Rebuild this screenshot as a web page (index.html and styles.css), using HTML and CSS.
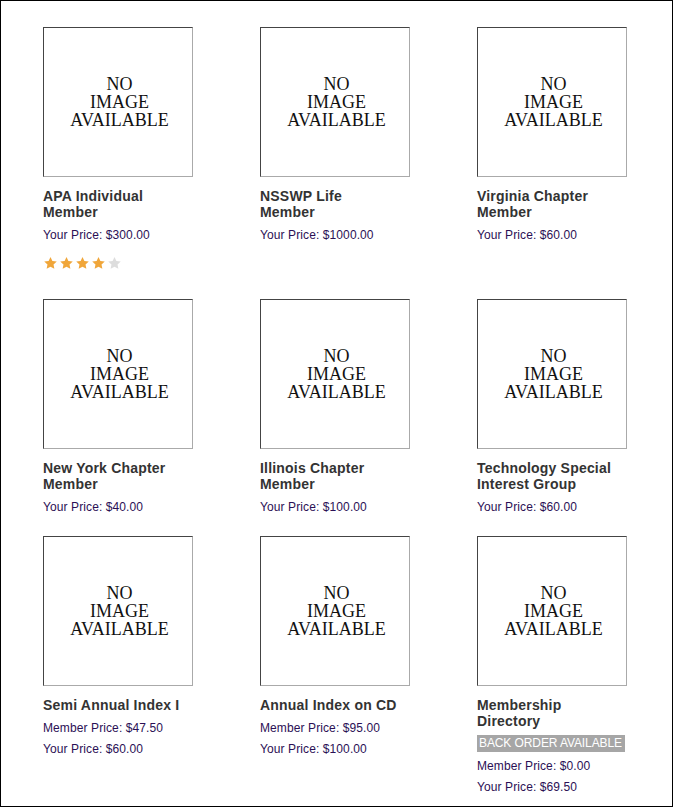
FILE: index.html
```html
<!DOCTYPE html>
<html>
  <head>
    <title>Products</title>
    <link rel="stylesheet" href="styles.css">
  </head>
  <body>
    <div class="page">
      <div class="grid">

	<div class="item">
	  <div class="noimg">NO<br>IMAGE<br>AVAILABLE</div>
	  <h3 class="name">APA Individual Member</h3>
	  <p class="price">Your Price: $300.00</p>
	  <div class="stars">
	    <svg class="star on" viewBox="0 0 24 23"><path d="M12 0l3.6 7.6 8.4 1-6.2 5.8 1.6 8.3L12 18.6 4.6 22.7l1.6-8.3L0 8.6l8.4-1z"/></svg>
	    <svg class="star on" viewBox="0 0 24 23"><path d="M12 0l3.6 7.6 8.4 1-6.2 5.8 1.6 8.3L12 18.6 4.6 22.7l1.6-8.3L0 8.6l8.4-1z"/></svg>
	    <svg class="star on" viewBox="0 0 24 23"><path d="M12 0l3.6 7.6 8.4 1-6.2 5.8 1.6 8.3L12 18.6 4.6 22.7l1.6-8.3L0 8.6l8.4-1z"/></svg>
	    <svg class="star on" viewBox="0 0 24 23"><path d="M12 0l3.6 7.6 8.4 1-6.2 5.8 1.6 8.3L12 18.6 4.6 22.7l1.6-8.3L0 8.6l8.4-1z"/></svg>
	    <svg class="star" viewBox="0 0 24 23"><path d="M12 0l3.6 7.6 8.4 1-6.2 5.8 1.6 8.3L12 18.6 4.6 22.7l1.6-8.3L0 8.6l8.4-1z"/></svg>
	  </div>
	</div>

	<div class="item">
	  <div class="noimg">NO<br>IMAGE<br>AVAILABLE</div>
	  <h3 class="name">NSSWP Life<br>Member</h3>
	  <p class="price">Your Price: $1000.00</p>
	</div>

	<div class="item">
	  <div class="noimg">NO<br>IMAGE<br>AVAILABLE</div>
	  <h3 class="name">Virginia Chapter Member</h3>
	  <p class="price">Your Price: $60.00</p>
	</div>

	<div class="item">
	  <div class="noimg">NO<br>IMAGE<br>AVAILABLE</div>
	  <h3 class="name">New York Chapter Member</h3>
	  <p class="price">Your Price: $40.00</p>
	</div>

	<div class="item">
	  <div class="noimg">NO<br>IMAGE<br>AVAILABLE</div>
	  <h3 class="name">Illinois Chapter Member</h3>
	  <p class="price">Your Price: $100.00</p>
	</div>

	<div class="item">
	  <div class="noimg">NO<br>IMAGE<br>AVAILABLE</div>
	  <h3 class="name">Technology Special Interest Group</h3>
	  <p class="price">Your Price: $60.00</p>
	</div>

	<div class="item">
	  <div class="noimg">NO<br>IMAGE<br>AVAILABLE</div>
	  <h3 class="name">Semi Annual Index I</h3>
	  <p class="price">Member Price: $47.50</p>
	  <p class="price">Your Price: $60.00</p>
	</div>

	<div class="item">
	  <div class="noimg">NO<br>IMAGE<br>AVAILABLE</div>
	  <h3 class="name">Annual Index on CD</h3>
	  <p class="price">Member Price: $95.00</p>
	  <p class="price">Your Price: $100.00</p>
	</div>

	<div class="item">
	  <div class="noimg">NO<br>IMAGE<br>AVAILABLE</div>
	  <h3 class="name">Membership Directory</h3>
	  <span class="backorder">BACK ORDER AVAILABLE</span>
	  <p class="price">Member Price: $0.00</p>
	  <p class="price">Your Price: $69.50</p>
	</div>

      </div>
    </div>
  </body>
</html>
```

FILE: styles.css
```css
* {
    box-sizing: border-box;
}

html, body {
    margin: 0;
    background: #fff;
}

.page {
    width: 673px;
    height: 807px;
    border: 1px solid #000;
    padding: 26px 0 0 42px;
    font-family: "Liberation Sans", Arial, sans-serif;
}

.grid {
    display: grid;
    grid-template-columns: repeat(3, 150px);
    column-gap: 67px;
    row-gap: 22px;
    align-items: start;
}

.item {
    width: 150px;
}

.noimg {
    width: 150px;
    height: 150px;
    border: 1px solid #444;
    border-right-color: #aaa;
    border-bottom-color: #aaa;
    display: flex;
    align-items: center;
    justify-content: center;
    padding: 0 0 1px 3px;
    text-align: center;
    font: 18px/18px "Liberation Serif", "Times New Roman", serif;
    color: #111;
}

.name {
    margin: 11px 0 0;
    padding-bottom: 1px;
    font-size: 14px;
    line-height: 16px;
    font-weight: bold;
    letter-spacing: 0.2px;
    color: #333;
}

.price {
    margin: 7px 0 0;
    font-size: 12px;
    line-height: 14px;
    letter-spacing: 0.1px;
    color: #2b1055;
}

.backorder {
    display: inline-block;
    margin-top: 5px;
    padding: 0 3px 0 2px;
    background: #a6a6a6;
    color: #fff;
    font-size: 12px;
    line-height: 17px;
    letter-spacing: -0.1px;
}

.stars {
    display: flex;
    gap: 3px;
    height: 20px;
    margin: 15px 0 0 1px;
}

.star {
    width: 13px;
    height: 12px;
    fill: #ddd;
}

.star.on {
    fill: #f0a63a;
}
```
